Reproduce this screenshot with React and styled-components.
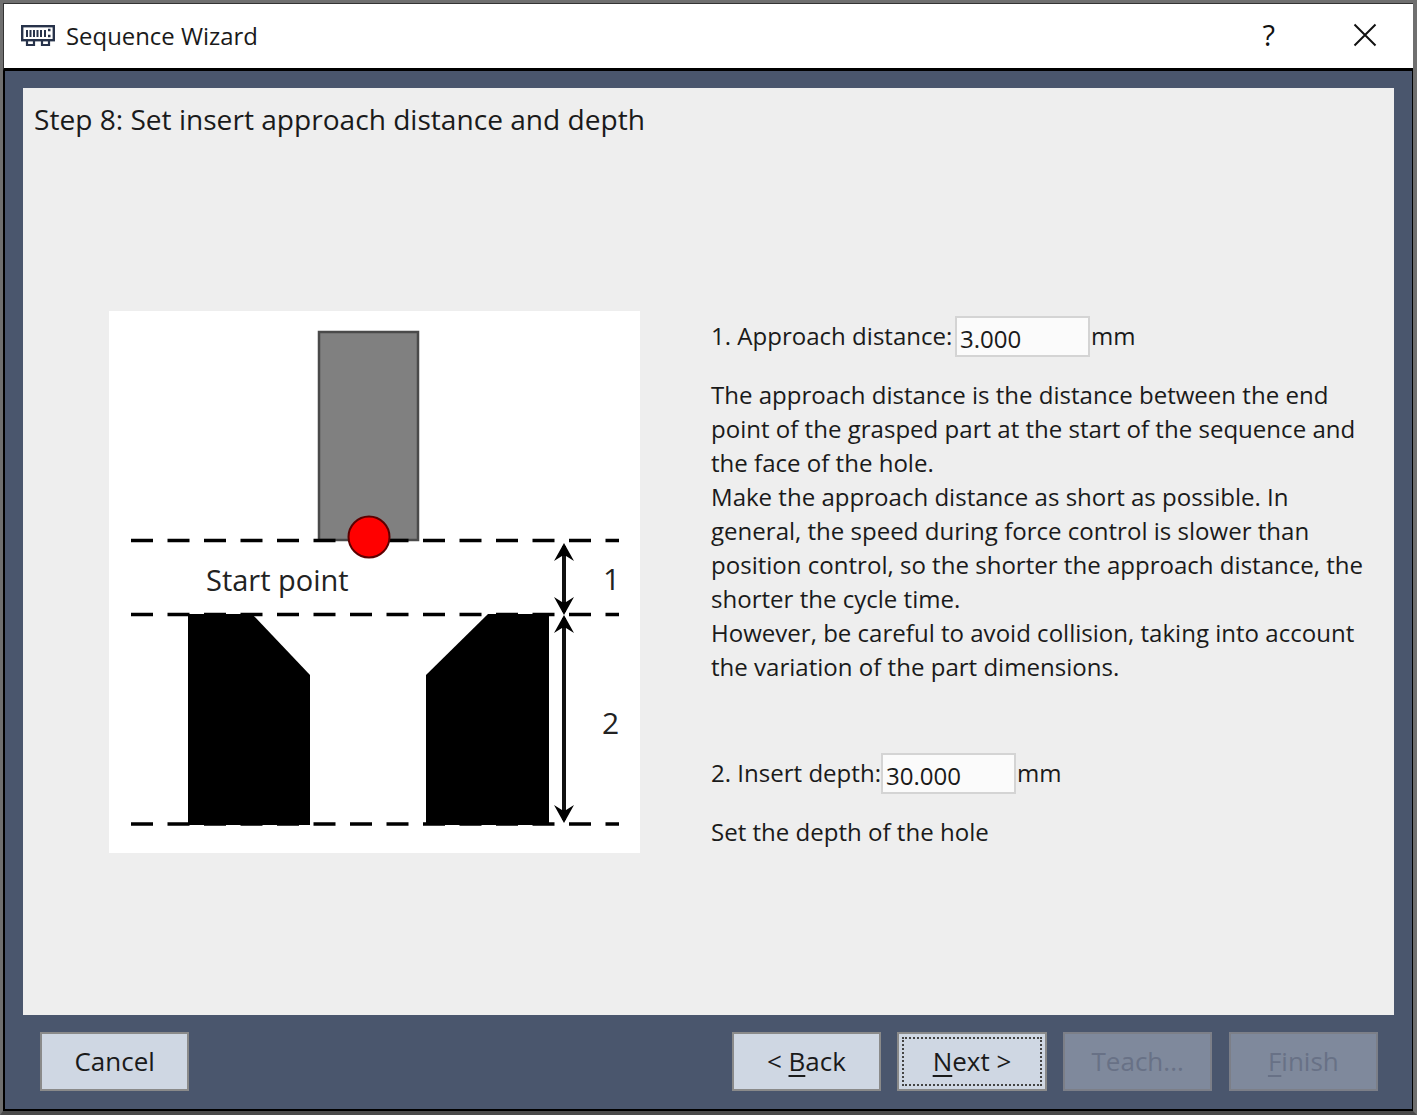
import React from "react";
import styled, { createGlobalStyle } from "styled-components";

const GlobalStyle = createGlobalStyle`
    html, body {
        margin: 0;
        padding: 0;
        background: #ffffff;
    }
    body {
        font-family: "Open Sans", "Noto Sans", "Liberation Sans", sans-serif;
        color: #1a1a1a;
    }
`;

const Window = styled.div`
    box-sizing: border-box;
    width: 1417px;
    height: 1115px;
    display: flex;
    flex-direction: column;
    background: #4a566d;
    border-top: 3px solid #6f6f6f;
    border-left: 3px solid #6f6f6f;
    border-right: 4px solid #6f6f6f;
    border-bottom: 4px solid #4a4a4a;
`;

const TitleBar = styled.header`
    box-sizing: border-box;
    height: 68px;
    flex: none;
    display: flex;
    align-items: center;
    padding: 0 36px 0 17px;
    background: #ffffff;
    border-top: 1px solid #333333;
    border-left: 1px solid #333333;
    border-bottom: 3px solid #000000;
`;

const TitleText = styled.span`
    margin-left: 11px;
    margin-top: -2px;
    font-size: 23.9px;
    color: #1a1a1a;
`;

const TitleActions = styled.div`
    margin-left: auto;
    margin-top: -2px;
    display: flex;
    align-items: center;
    gap: 78px;
`;

const HelpMark = styled.span`
    font-size: 29px;
    line-height: 1;
    margin-top: -2px;
    color: #111111;
`;

const Body = styled.main`
    flex: 1;
    min-height: 0;
    display: flex;
    flex-direction: column;
    padding: 17px 18px 0 18px;
    border-left: 2px solid #000000;
    border-right: 1px solid #000000;
    border-bottom: 2px solid #000000;
`;

const Panel = styled.section`
    box-sizing: border-box;
    height: 927px;
    flex: none;
    background: #eeeeee;
    padding: 13px 11px 0 11px;
`;

const Heading = styled.h1`
    margin: 0;
    height: 36px;
    font-size: 28.1px;
    line-height: 36px;
    font-weight: 400;
    color: #1a1a1a;
`;

const Content = styled.div`
    display: flex;
    align-items: flex-start;
    margin-top: 174px;
    padding-left: 75px;
`;

const DiagramFrame = styled.svg`
    display: block;
    flex: none;
    width: 531px;
    height: 542px;
    background: #ffffff;
`;

const Instructions = styled.div`
    flex: 1;
    margin-left: 71px;
    padding-top: 5px;
    font-size: 24.05px;
    line-height: 34px;
`;

const FieldRow = styled.div`
    display: flex;
    align-items: center;
    height: 41px;
    margin-top: ${(props) => props.$top || 0}px;
`;

const FieldLabel = styled.label`
    width: ${(props) => props.$width}px;
    margin-top: -2px;
    white-space: nowrap;
`;

const Unit = styled.span`
    margin-top: -2px;
    margin-left: 1px;
`;

const NumberInput = styled.input`
    box-sizing: border-box;
    width: 135px;
    height: 41px;
    padding: 3px 3px 0 3px;
    border: 2px solid #d4d4d4;
    border-radius: 0;
    outline: none;
    background: #fbfbfb;
    font: inherit;
    color: #1a1a1a;
`;

const Paragraph = styled.p`
    margin: ${(props) => props.$top || 0}px 0 0 0;
    width: 660px;
`;

const Footer = styled.footer`
    flex: 1;
    display: flex;
    align-items: flex-start;
    gap: 16.33px;
    padding: 17px 16px 0 17px;
`;

const Spacer = styled.div`
    flex: 1;
`;

const Button = styled.button`
    box-sizing: border-box;
    width: 149.33px;
    height: 59px;
    padding: 0 0 2px 0;
    position: relative;
    border: 2px solid ${(props) => (props.disabled ? "#7c7f88" : "#8a8a8a")};
    background: ${(props) => (props.disabled ? "#7f899c" : "#cfd7e3")};
    color: ${(props) => (props.disabled ? "#687186" : "#1a1a1a")};
    font-family: inherit;
    font-size: 26px;
    line-height: 1;

    u {
        text-underline-offset: 4px;
        text-decoration-thickness: 2px;
    }

    &.focused::after {
        content: "";
        position: absolute;
        inset: 3px;
        border: 2px dotted #444444;
    }
`;

const WindowIcon = () => (
    <svg width="34" height="22" viewBox="0 0 34 22" fill="none">
        <rect x="1.2" y="1.2" width="31.6" height="14" stroke="#27324a" strokeWidth="2.4" />
        <path d="M6 5v7M9.5 5v7M13 5v7M16.5 5v7M20 5v7" stroke="#27324a" strokeWidth="2" />
        <path d="M24 5v7" stroke="#27324a" strokeWidth="2" />
        <path d="M27 5h2.5M27 11h2.5" stroke="#27324a" strokeWidth="2.4" />
        <path d="M6 15v5h7v-5M21 15v5h7v-5" stroke="#27324a" strokeWidth="2.2" />
    </svg>
);

const CloseIcon = () => (
    <svg width="24" height="24" viewBox="0 0 24 24">
        <path d="M1.5 1.5l21 21M22.5 1.5l-21 21" stroke="#111111" strokeWidth="2" />
    </svg>
);

const dash = { stroke: "#000000", strokeWidth: 3.5, strokeDasharray: "22 14.5" };

const Arrow = ({ x, y1, y2 }) => (
    <g>
        <path d={`M${x} ${y1 + 3}V${y2 - 3}`} stroke="#111111" strokeWidth="4" fill="none" />
        <path
            d={`M${x} ${y1}L${x + 10} ${y1 + 18}L${x + 2} ${y1 + 13}H${x - 2}L${x - 10} ${y1 + 18}Z`}
            fill="#000000"
        />
        <path
            d={`M${x} ${y2}L${x + 10} ${y2 - 18}L${x + 2} ${y2 - 13}H${x - 2}L${x - 10} ${y2 - 18}Z`}
            fill="#000000"
        />
    </g>
);

// picture coordinates are relative to the white frame
const Diagram = () => (
    <DiagramFrame viewBox="0 0 531 542">
        <rect x="210" y="21" width="99" height="208" fill="#808080" stroke="#4a4a4a" strokeWidth="2.5" />
        <path d="M79 303H143L201 364V514H79Z" fill="#000000" />
        <path d="M317 364L379 303H440V514H317Z" fill="#000000" />
        <line x1="22" y1="229.5" x2="510" y2="229.5" style={dash} />
        <line x1="22" y1="303.5" x2="510" y2="303.5" style={dash} />
        <line x1="22" y1="513" x2="510" y2="513" style={dash} />
        <circle cx="260" cy="226" r="20.5" fill="#ff0000" stroke="#5c0000" strokeWidth="2" />
        <Arrow x={455} y1={232} y2={304} />
        <Arrow x={455} y1={304} y2={512} />
        <text x="97" y="280" fontSize="29" fill="#222222" fontFamily="Open Sans, sans-serif">Start point</text>
        <text x="494" y="279" fontSize="30" fill="#222222" fontFamily="Open Sans, sans-serif">1</text>
        <text x="493" y="423" fontSize="30" fill="#222222" fontFamily="Open Sans, sans-serif">2</text>
    </DiagramFrame>
);

export default function App() {
    return (
        <>
            <GlobalStyle />
            <Window>
                <TitleBar>
                    <WindowIcon />
                    <TitleText>Sequence Wizard</TitleText>
                    <TitleActions>
                        <HelpMark>?</HelpMark>
                        <CloseIcon />
                    </TitleActions>
                </TitleBar>
                <Body>
                    <Panel>
                        <Heading>Step 8: Set insert approach distance and depth</Heading>
                        <Content>
                            <Diagram />
                            <Instructions>
                                <FieldRow>
                                    <FieldLabel $width={244}>1. Approach distance:</FieldLabel>
                                    <NumberInput defaultValue="3.000" />
                                    <Unit>mm</Unit>
                                </FieldRow>
                                <Paragraph $top={21}>
                                    The approach distance is the distance between the end point of the grasped part at the start of the sequence and the face of the hole.
                                    <br />
                                    Make the approach distance as short as possible. In general, the speed during force control is slower than position control, so the shorter the approach distance, the shorter the cycle time.
                                    <br />
                                    However, be careful to avoid collision, taking into account the variation of the part dimensions.
                                </Paragraph>
                                <FieldRow $top={69}>
                                    <FieldLabel $width={170}>2. Insert depth:</FieldLabel>
                                    <NumberInput defaultValue="30.000" />
                                    <Unit>mm</Unit>
                                </FieldRow>
                                <Paragraph $top={21}>Set the depth of the hole</Paragraph>
                            </Instructions>
                        </Content>
                    </Panel>
                    <Footer>
                        <Button>Cancel</Button>
                        <Spacer />
                        <Button>&lt; <u>B</u>ack</Button>
                        <Button className="focused"><u>N</u>ext &gt;</Button>
                        <Button disabled>Teach...</Button>
                        <Button disabled><u>F</u>inish</Button>
                    </Footer>
                </Body>
            </Window>
        </>
    );
}
